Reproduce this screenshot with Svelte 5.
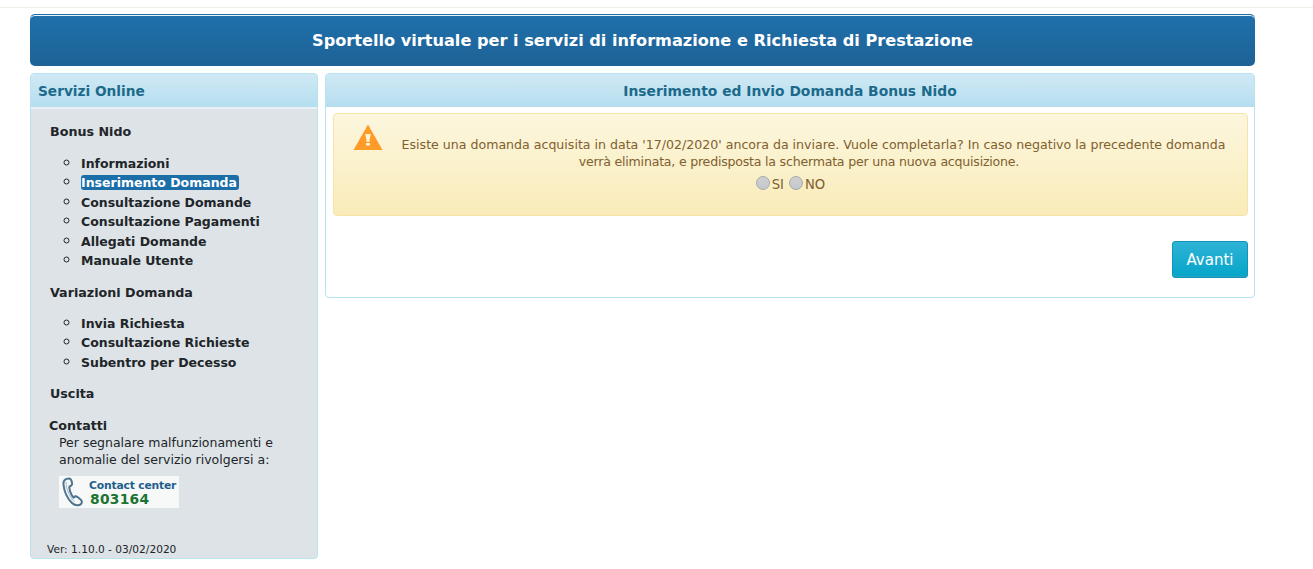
<script>
  const bonus = ['Informazioni', 'Inserimento Domanda', 'Consultazione Domande', 'Consultazione Pagamenti', 'Allegati Domande', 'Manuale Utente'];
  const variazioni = ['Invia Richiesta', 'Consultazione Richieste', 'Subentro per Decesso'];
</script>

<div class="topline"></div>
<div class="page">
  <header class="banner">Sportello virtuale per i servizi di informazione e Richiesta di Prestazione</header>
  <div class="columns">
    <aside class="side">
      <div class="side-head">Servizi Online</div>
      <div class="side-body">
        <h3 class="first">Bonus Nido</h3>
        <ul class="list-one">
          {#each bonus as item}
            <li><a class:active={item === 'Inserimento Domanda'} href="#top">{item}</a></li>
          {/each}
        </ul>
        <h3 class="second">Variazioni Domanda</h3>
        <ul class="list-two">
          {#each variazioni as item}
            <li><a href="#top">{item}</a></li>
          {/each}
        </ul>
        <h3 class="third">Uscita</h3>
        <h3 class="contacts">Contatti</h3>
        <p class="info">Per segnalare malfunzionamenti e<br />anomalie del servizio rivolgersi a:</p>
        <div class="contact-card">
          <svg class="phone" width="22" height="32" viewBox="0 0 22 32" fill="none">
            <path d="M8 2.5C4.5 2.5 2 4.500 2.500 8.500C3 14 6 22 11 27C13.500 29.500 18 30 20 28C21.500 26.500 21 24.500 19 23L16.500 21C15 20 13.500 20.500 12.500 21.500C10 19 8 13.500 8.500 10.500C10.500 10 11.500 8.500 11 6.500C10.500 4 9.500 2.500 8 2.500Z" stroke="#4d7391" stroke-width="2" />
            <path d="M5 6C5 12 8 20 13 25.500" stroke="#9fb6c7" stroke-width="1" />
          </svg>
          <div class="contact-text">
            <span class="cc">Contact center</span>
            <span class="num">803164</span>
          </div>
        </div>
        <div class="version">Ver: 1.10.0 - 03/02/2020</div>
      </div>
    </aside>
    <main class="content">
      <div class="content-head">Inserimento ed Invio Domanda Bonus Nido</div>
      <div class="content-body">
        <div class="alert">
          <svg class="warn" width="30" height="26" viewBox="0 0 30 26">
            <path d="M15 0.500L29.500 26H0.500Z" fill="#ff9b28" />
            <path d="M12.300 10H17.700L16.300 18H13.700Z" fill="#fdf3d0" />
            <rect x="13" y="19" width="4" height="2.500" fill="#fdf3d0" />
          </svg>
          <p>Esiste una domanda acquisita in data '17/02/2020' ancora da inviare. Vuole completarla? In caso negativo la precedente domanda <span class="tight">verrà eliminata, e predisposta la schermata per una nuova acquisizione.</span></p>
          <div class="choices">
            <label><span class="radio"></span><span class="lab">SI</span></label>
            <label><span class="radio"></span><span class="lab">NO</span></label>
          </div>
        </div>
        <div class="actions"><button type="button">Avanti</button></div>
      </div>
    </main>
  </div>
</div>

<style>
  :global(body) {
    margin: 0;
    background: #fff;
    font-family: "DejaVu Sans", Verdana, sans-serif;
    font-size: 12.6px;
    color: #212529;
  }
  .topline {
    height: 7px;
    border-bottom: 1px solid #eeeee6;
  }
  .page {
    width: 1225px;
    margin-left: 30px;
    padding-top: 6px;
  }
  .banner {
    box-sizing: border-box;
    height: 52px;
    border-radius: 5px;
    border-top: 1px solid #1c6ea8;
    box-shadow: inset 0 1px 0 #e9f2f8;
    background: linear-gradient(#1f70ab, #1e6296);
    color: #fff;
    font-weight: bold;
    font-size: 16.150px;
    line-height: 51px;
    text-align: center;
  }
  .columns {
    display: flex;
    align-items: flex-start;
    gap: 7px;
    margin-top: 7px;
  }
  .side {
    box-sizing: border-box;
    width: 288px;
    height: 486px;
    border: 1px solid #b5e3f0;
    border-radius: 4px;
    background: #dde3e6;
    overflow: hidden;
  }
  .side-head {
    height: 33px;
    line-height: 35px;
    padding-left: 7px;
    border-bottom: 2px solid #eaf0f3;
    background: linear-gradient(#d0e9f5, #b5deef);
    color: #1c6a8b;
    font-weight: bold;
    font-size: 13.700px;
  }
  .side-body {
    position: relative;
    height: 449px;
    padding-left: 19px;
  }
  h3 {
    margin: 0;
    font-size: 12.700px;
    line-height: 19px;
    font-weight: bold;
    color: #212529;
  }
  h3.first { padding-top: 13px; }
  h3.second { padding-top: 13px; }
  h3.third { padding-top: 12.800px; }
  h3.contacts { padding-top: 13px; margin-left: -1px; }
  ul {
    list-style: circle;
    padding: 0 0 0 31px;
  }
  ul.list-one {
    margin: 11.700px 0 0;
  }
  ul.list-two {
    margin: 11.200px 0 0;
  }
  li {
    height: 19.500px;
    line-height: 19.500px;
    font-size: 12.500px;
    font-weight: bold;
  }
  li::marker {
    font-size: 16px;
  }
  li a {
    color: #212529;
    text-decoration: none;
  }
  li a.active {
    color: #fff;
    background: #1c6ea8;
    border-radius: 3px;
    padding-right: 2px;
  }
  .info {
    margin: -1px 0 0 9px;
    line-height: 17px;
    font-size: 12.500px;
  }
  .contact-card {
    display: flex;
    gap: 6px;
    width: 120px;
    height: 32px;
    box-sizing: border-box;
    margin: 8px 0 0 9px;
    padding-left: 2px;
    background: #f7f8f8;
  }
  .phone {
    flex: none;
  }
  .contact-text {
    display: flex;
    flex-direction: column;
    padding-top: 4px;
    font-weight: bold;
  }
  .cc {
    font-size: 10.800px;
    line-height: 11px;
    letter-spacing: -0.2px;
    white-space: nowrap;
    color: #1f5f8e;
  }
  .num {
    font-size: 13.800px;
    line-height: 16px;
    letter-spacing: 0.3px;
    margin-left: 1px;
    color: #1b7431;
  }
  .version {
    position: absolute;
    left: 16px;
    bottom: 2px;
    font-size: 10.600px;
    line-height: 14px;
  }
  .content {
    box-sizing: border-box;
    flex: 1;
    height: 225px;
    border: 1px solid #b5e3f0;
    border-radius: 4px;
    overflow: hidden;
  }
  .content-head {
    height: 33px;
    line-height: 35px;
    text-align: center;
    background: linear-gradient(#d0e9f5, #b5deef);
    color: #1c6a8b;
    font-weight: bold;
    font-size: 13.850px;
  }
  .content-body {
    padding: 6px 6px 0 7px;
  }
  .alert {
    box-sizing: border-box;
    display: grid;
    grid-template-columns: 34px 1fr;
    grid-template-rows: auto 1fr;
    height: 103px;
    border: 1px solid #f5e3a8;
    border-radius: 4px;
    background: linear-gradient(#fcf6de, #f9ecb9);
    color: #80602f;
  }
  .warn {
    margin: 10px 0 0 19px;
  }
  .alert p {
    margin: 0;
    padding: 22px 17px 0 0;
    text-align: center;
    text-indent: 29px;
    font-size: 12.590px;
    line-height: 17px;
  }
  .tight {
    letter-spacing: -0.22px;
  }
  .choices {
    grid-column: 1 / -1;
    display: flex;
    justify-content: center;
    gap: 5px;
    margin-top: 6px;
    font-size: 13.200px;
  }
  .choices label {
    display: flex;
    align-items: flex-start;
    gap: 2px;
  }
  .radio {
    box-sizing: border-box;
    width: 14px;
    height: 14px;
    border: 1px solid #a8a8a8;
    border-radius: 50%;
    background: linear-gradient(#d0d0d0, #c4c8cc);
  }
  .lab {
    line-height: 18px;
  }
  .actions {
    display: flex;
    justify-content: flex-end;
    margin-top: 25px;
  }
  button {
    box-sizing: border-box;
    width: 76px;
    height: 37px;
    border: 1px solid #0f96b8;
    border-radius: 3px;
    background: linear-gradient(#2fb3d6, #05a5c9);
    box-shadow: inset 0 -1px 0 #2b9fc0;
    color: #fff;
    font-family: inherit;
    font-size: 15px;
    padding: 0;
  }
</style>
